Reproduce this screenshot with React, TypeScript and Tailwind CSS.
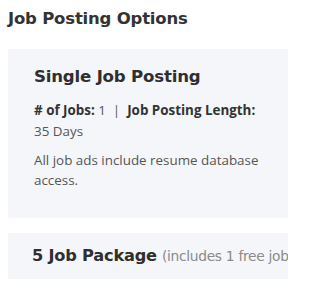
import React from 'react';

const heading = { fontFamily: '"DejaVu Sans", sans-serif' };

export default function App() {
  return (
    <div className="w-[288px] h-[288px] overflow-hidden bg-white pl-2 text-[#333]" style={{ fontFamily: '"Open Sans", sans-serif' }}>
      <h2 className="pt-[9px] text-[16.5px] leading-5 font-bold tracking-[-0.2px] text-[#333]" style={heading}>
        Job Posting Options
      </h2>
      <div className="mt-[20px] h-[169px] bg-[#f5f6f9] pl-[26px] pt-[16px]">
        <h3 className="text-[16.6px] leading-6 font-bold tracking-[-0.2px] text-[#2f2f2f]" style={heading}>
          Single Job Posting
        </h3>
        <p className="mt-[11px] w-[228px] text-[13.4px] leading-[21px] text-[#555]">
          <span className="font-bold text-[#333]"># of Jobs:</span> 1 &nbsp;|&nbsp; <span className="font-bold text-[#333]">Job Posting Length:</span> 35 Days
        </p>
        <p className="mt-[8px] w-[232px] text-[13.4px] leading-[20px] text-[#555]">
          All job ads include resume database access.
        </p>
      </div>
      <div className="mt-[15px] h-[46px] bg-[#f5f6f9] pl-[24px] flex items-center whitespace-nowrap overflow-hidden">
        <span className="text-[16.2px] font-bold tracking-[-0.2px] text-[#2f2f2f]" style={heading}>5 Job Package</span>
        <span className="ml-[5px] text-[13.8px] tracking-[-0.3px] text-[#8a8a8a]" style={heading}>(includes 1 free job)</span>
      </div>
    </div>
  );
}
